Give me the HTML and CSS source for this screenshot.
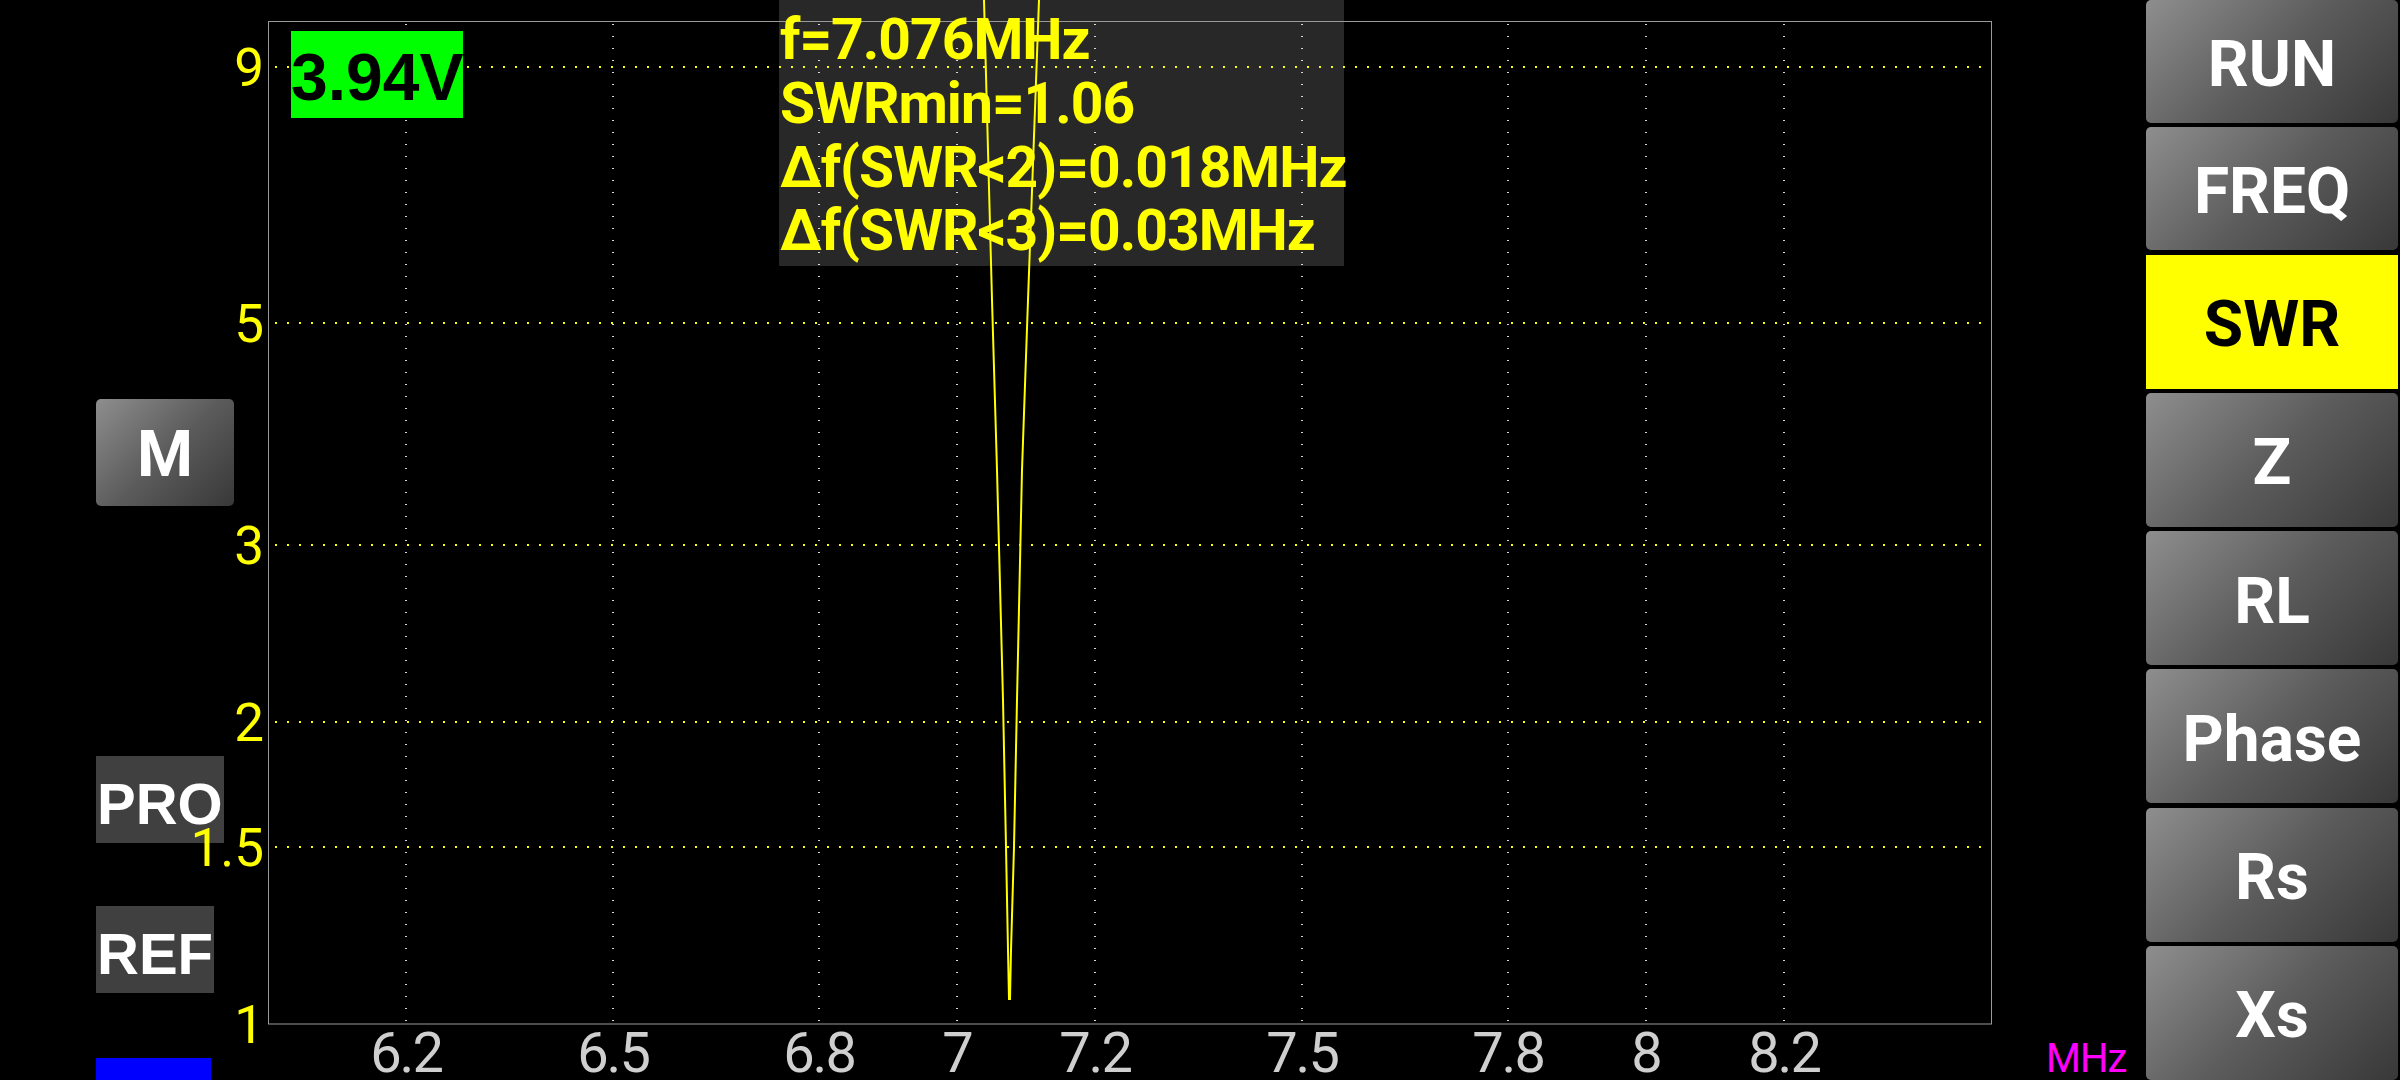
FILE: index.html
```html
<!DOCTYPE html>
<html lang="en">
<head>
    <meta charset="UTF-8">
    <meta name="viewport" content="width=device-width, initial-scale=1.0">
    <title>SWR Analyzer</title>
    <link rel="stylesheet" href="styles.css">
</head>
<body>
    <div class="screen">
        <div class="main">
            <div class="controls">
                <button class="btn btn-m">M</button>
                <span class="tag tag-pro">PRO</span>
                <span class="tag tag-ref">REF</span>
                <span class="ref-bar"></span>
            </div>

            <svg class="chart" width="2146" height="1080" viewBox="0 0 2146 1080">
                <!-- marker info panel (drawn under the grid) -->
                <rect x="779" y="0" width="565" height="266" fill="#282828"/>

                <!-- frame -->
                <rect x="268.5" y="21.5" width="1723" height="1002.5" fill="none" stroke="#9a9a9a" stroke-width="1"/>

                <!-- horizontal grid: SWR 9, 5, 3, 2, 1.5 -->
                <g class="grid-h">
                    <line x1="275" y1="67" x2="1990" y2="67"/>
                    <line x1="275" y1="323" x2="1990" y2="323"/>
                    <line x1="275" y1="545" x2="1990" y2="545"/>
                    <line x1="275" y1="722" x2="1990" y2="722"/>
                    <line x1="275" y1="847" x2="1990" y2="847"/>
                </g>

                <!-- vertical grid -->
                <g class="grid-v">
                    <line x1="406" y1="24" x2="406" y2="1022"/>
                    <line x1="613" y1="24" x2="613" y2="1022"/>
                    <line x1="819" y1="24" x2="819" y2="1022"/>
                    <line x1="957" y1="24" x2="957" y2="1022"/>
                    <line x1="1095" y1="24" x2="1095" y2="1022"/>
                    <line x1="1302" y1="24" x2="1302" y2="1022"/>
                    <line x1="1508" y1="24" x2="1508" y2="1022"/>
                    <line x1="1646" y1="24" x2="1646" y2="1022"/>
                    <line x1="1784" y1="24" x2="1784" y2="1022"/>
                </g>

                <!-- y axis -->
                <g class="axis-y">
                    <text x="264" y="86">9</text>
                    <text x="264" y="342">5</text>
                    <text x="264" y="564">3</text>
                    <text x="264" y="741">2</text>
                    <text x="264" y="866">1.5</text>
                    <text x="264" y="1043">1</text>
                </g>

                <!-- x axis -->
                <g class="axis-x">
                    <text x="406" y="1072">6.2</text>
                    <text x="613" y="1072">6.5</text>
                    <text x="819" y="1072">6.8</text>
                    <text x="957" y="1072">7</text>
                    <text x="1095" y="1072">7.2</text>
                    <text x="1302" y="1072">7.5</text>
                    <text x="1508" y="1072">7.8</text>
                    <text x="1646" y="1072">8</text>
                    <text x="1784" y="1072">8.2</text>
                </g>
                <text class="unit" x="2046" y="1072">MHz</text>

                <!-- SWR trace -->
                <polyline class="trace" points="984,0 992,300 997,470 1003,700 1006,847 1008,950 1009,999 1010,999 1011,950 1014,847 1017,700 1022,470 1028,300 1039,0"/>

                <!-- marker readout -->
                <g class="readout">
                    <text x="780" y="59">f=7.076MHz</text>
                    <text x="780" y="123">SWRmin=1.06</text>
                    <text x="780" y="187">Δf(SWR&lt;2)=0.018MHz</text>
                    <text x="780" y="250">Δf(SWR&lt;3)=0.03MHz</text>
                </g>
            </svg>

            <div class="battery">
                <span class="volt">3.94V</span>
            </div>
        </div>

        <nav class="side">
            <button class="btn side-btn short">RUN</button>
            <button class="btn side-btn short">FREQ</button>
            <button class="btn side-btn active">SWR</button>
            <button class="btn side-btn">Z</button>
            <button class="btn side-btn">RL</button>
            <button class="btn side-btn">Phase</button>
            <button class="btn side-btn">Rs</button>
            <button class="btn side-btn">Xs</button>
        </nav>
    </div>
</body>
</html>
```

FILE: styles.css
```css
* {
    margin: 0;
    padding: 0;
    box-sizing: border-box;
}

body {
    background-color: #000;
    font-family: 'Roboto', 'Liberation Sans', sans-serif;
    overflow: hidden;
}

.screen {
    display: flex;
    width: 2400px;
    height: 1080px;
}

/* chart area: controls, svg and readout share one grid cell */
.main {
    flex: 1;
    display: grid;
}

.main > * {
    grid-area: 1 / 1;
}

.controls {
    display: flex;
    flex-direction: column;
    align-items: flex-start;
    padding-left: 96px;
    z-index: 0;
}

.btn {
    border: none;
    color: #fff;
    font-family: 'Roboto', sans-serif;
    font-weight: bold;
    background: linear-gradient(135deg, #8e8e8e 0%, #5c5c5c 50%, #383838 100%);
    border-radius: 5px;
    cursor: pointer;
}

.btn-m {
    width: 138px;
    height: 107px;
    margin-top: 399px;
    font-size: 64px;
    padding-top: 4px;
}

.tag {
    display: block;
    height: 87px;
    background-color: #404040;
    color: #fff;
    font-family: 'Liberation Sans', Arial, sans-serif;
    font-weight: bold;
    font-size: 58px;
    line-height: 87px;
    padding: 4px 1px 0 1px;
    white-space: nowrap;
}

.tag-pro {
    margin-top: 250px;
}

.tag-ref {
    margin-top: 63px;
}

.ref-bar {
    display: block;
    width: 115px;
    height: 22px;
    margin-top: 65px;
    background-color: #0000ff;
}

.chart {
    display: block;
    z-index: 1;
    pointer-events: none;
}

.grid-h line {
    stroke: #ffff00;
    stroke-width: 2;
    stroke-dasharray: 2 10;
}

.grid-v line {
    stroke: #d8d8d8;
    stroke-width: 2;
    stroke-dasharray: 1 11;
}

.axis-y text {
    fill: #ffff00;
    font-family: 'Roboto', sans-serif;
    font-size: 53px;
    text-anchor: end;
}

.axis-x text {
    fill: #cfcfcf;
    font-family: 'Roboto', sans-serif;
    font-size: 56px;
    letter-spacing: -2px;
    text-anchor: middle;
}

.unit {
    fill: #ff00ff;
    font-family: 'Roboto', sans-serif;
    font-size: 40px;
    letter-spacing: -1px;
}

.trace {
    fill: none;
    stroke: #ffff00;
    stroke-width: 2;
}

.readout text {
    fill: #ffff00;
    font-family: 'Roboto', sans-serif;
    font-weight: bold;
    font-size: 57px;
    letter-spacing: -1px;
}

.battery {
    align-self: start;
    justify-self: start;
    padding: 31px 0 0 291px;
    z-index: 2;
}

.volt {
    display: block;
    width: 172px;
    height: 87px;
    background-color: #00ff00;
    color: #000;
    font-family: 'Liberation Sans', Arial, sans-serif;
    font-weight: bold;
    font-size: 66px;
    line-height: 87px;
    padding-top: 3px;
    text-align: center;
    white-space: nowrap;
}

/* right-hand mode buttons */
.side {
    width: 254px;
    display: flex;
    flex-direction: column;
    justify-content: space-between;
    padding-right: 2px;
}

.side-btn {
    height: 134px;
    font-size: 64px;
    padding-top: 6px;
}

.side-btn.short {
    height: 123px;
}

.side-btn.active {
    background: #ffff00;
    color: #000;
    border-radius: 0;
}
```
